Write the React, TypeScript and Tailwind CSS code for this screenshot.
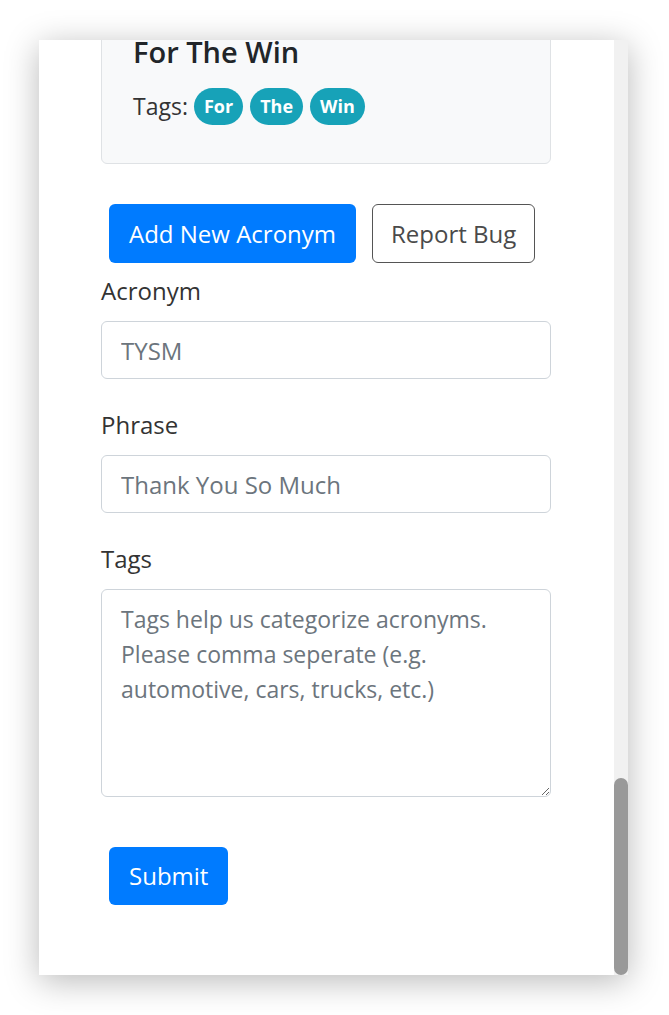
export default function App() {
  const font = { fontFamily: '"Open Sans", "Noto Sans", sans-serif' };

  return (
    <div className="w-full h-[1015px] bg-white overflow-hidden" style={font}>
      {/* Browser window */}
      <div className="ml-[39px] mt-[40px] w-[589px] h-[935px] bg-white flex overflow-hidden shadow-[0_6px_32px_rgba(0,0,0,0.28)]">
        {/* Page content, scrolled to bottom */}
        <div className="flex-1 overflow-hidden">
          <div className="ml-[62px] w-[450px] text-[#212529]">
            {/* Card */}
            <div className="-mt-[30px] rounded-[6px] border-[1.5px] border-[#dfe2e5] bg-[#f8f9fa] px-[31px] pt-[30px] pb-[38px]">
              <h5 className="text-[29px] leading-[22px] font-semibold text-[#212529]">For The Win</h5>
              <div className="mt-[24px] flex items-center h-[38px] text-[23px] text-[#333]">
                <span>Tags:</span>
                <div className="ml-[6px] flex gap-[7px]">
                  {['For', 'The', 'Win'].map((tag) => (
                    <span
                      key={tag}
                      className="h-[37px] px-[10px] rounded-full bg-[#17a2b8] text-white text-[18px] font-bold flex items-center"
                    >
                      {tag}
                    </span>
                  ))}
                </div>
              </div>
            </div>

            {/* Buttons */}
            <div className="mt-[40px] ml-[8px] flex gap-[16px]">
              <button className="h-[59px] px-[20px] rounded-[6px] bg-[#007bff] text-white text-[24px]">
                Add New Acronym
              </button>
              <button className="h-[59px] px-[18px] rounded-[6px] border-[1.5px] border-[#555] text-[#4a4a4a] text-[24px] bg-white">
                Report Bug
              </button>
            </div>

            {/* Form */}
            <form>
              <label className="block mt-[10px] mb-[12px] text-[24px] leading-[36px] text-[#333]">Acronym</label>
              <input
                className="w-full h-[58px] px-[19px] rounded-[6px] border-[1.5px] border-[#ced4da] text-[24px] outline-none placeholder:text-[#6c757d]"
                style={font}
                placeholder="TYSM"
              />

              <label className="block mt-[28px] mb-[12px] text-[24px] leading-[36px] text-[#333]">Phrase</label>
              <input
                className="w-full h-[58px] px-[19px] rounded-[6px] border-[1.5px] border-[#ced4da] text-[24px] outline-none placeholder:text-[#6c757d]"
                style={font}
                placeholder="Thank You So Much"
              />

              <label className="block mt-[28px] mb-[12px] text-[24px] leading-[36px] text-[#333]">Tags</label>
              <textarea
                className="block w-full h-[208px] px-[19px] py-[12px] rounded-[6px] border-[1.5px] border-[#ced4da] text-[23px] leading-[35px] outline-none placeholder:text-[#6c757d]"
                style={font}
                placeholder="Tags help us categorize acronyms. Please comma seperate (e.g. automotive, cars, trucks, etc.)"
              />

              <button
                type="button"
                className="mt-[50px] ml-[8px] h-[58px] px-[20px] rounded-[6px] bg-[#007bff] text-white text-[24px]"
              >
                Submit
              </button>
            </form>
          </div>
        </div>

        {/* Scrollbar */}
        <div className="w-[14px] bg-[#f1f1f1] flex flex-col justify-end">
          <div className="h-[197px] rounded-full bg-[#999]" />
        </div>
      </div>
    </div>
  );
}
